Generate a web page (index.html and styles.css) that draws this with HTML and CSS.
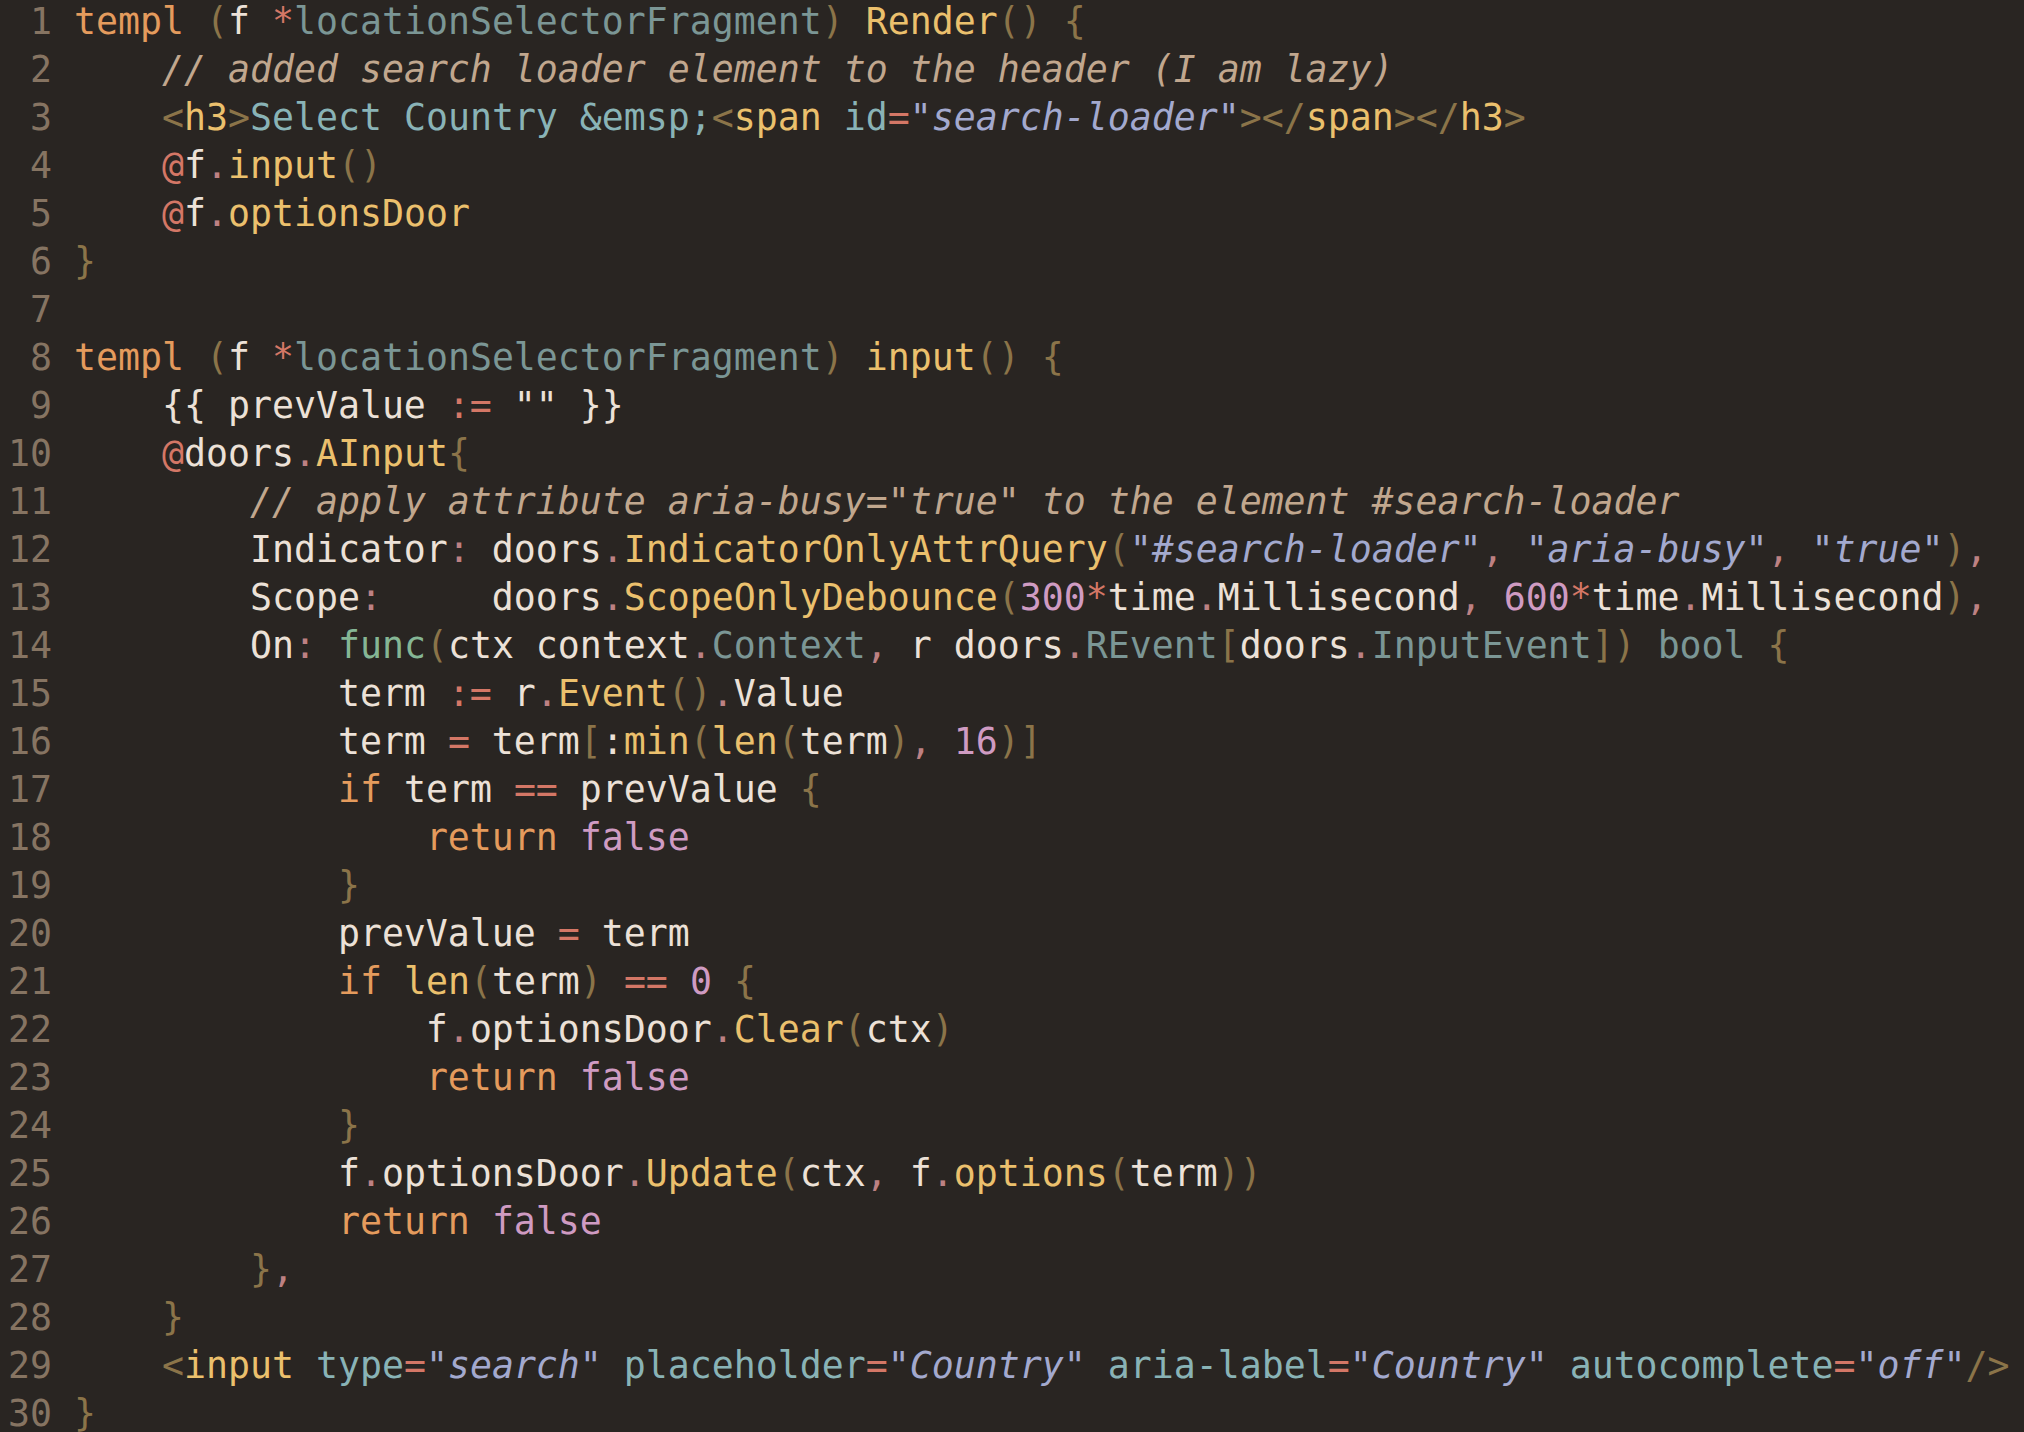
FILE: index.html
```html
<!DOCTYPE html>
<html lang="en">
<head>
<meta charset="utf-8">
<title>templ code</title>
<link rel="stylesheet" href="styles.css">
</head>
<body>
<div class="editor">
<div class="line"><span class="ln">1</span><code class="src"><span class="k">templ</span> <span class="p">(</span>f <span class="op">*</span><span class="t">locationSelectorFragment</span><span class="p">)</span> <span class="fn">Render</span><span class="p">()</span> <span class="p">{</span></code></div>
<div class="line"><span class="ln">2</span><code class="src">    <span class="c">// added search loader element to the header (I am lazy)</span></code></div>
<div class="line"><span class="ln">3</span><code class="src">    <span class="p">&lt;</span><span class="fn">h3</span><span class="p">&gt;</span><span class="a">Select Country &amp;emsp;</span><span class="p">&lt;</span><span class="fn">span</span> <span class="a">id</span><span class="op">=</span><span class="s">"search-loader"</span><span class="p">&gt;&lt;/</span><span class="fn">span</span><span class="p">&gt;&lt;/</span><span class="fn">h3</span><span class="p">&gt;</span></code></div>
<div class="line"><span class="ln">4</span><code class="src">    <span class="op">@</span>f<span class="d">.</span><span class="fn">input</span><span class="p">()</span></code></div>
<div class="line"><span class="ln">5</span><code class="src">    <span class="op">@</span>f<span class="d">.</span><span class="fn">optionsDoor</span></code></div>
<div class="line"><span class="ln">6</span><code class="src"><span class="p">}</span></code></div>
<div class="line"><span class="ln">7</span><code class="src"></code></div>
<div class="line"><span class="ln">8</span><code class="src"><span class="k">templ</span> <span class="p">(</span>f <span class="op">*</span><span class="t">locationSelectorFragment</span><span class="p">)</span> <span class="fn">input</span><span class="p">()</span> <span class="p">{</span></code></div>
<div class="line"><span class="ln">9</span><code class="src">    {{ prevValue <span class="op">:=</span> "" }}</code></div>
<div class="line"><span class="ln">10</span><code class="src">    <span class="op">@</span>doors<span class="d">.</span><span class="fn">AInput</span><span class="p">{</span></code></div>
<div class="line"><span class="ln">11</span><code class="src">        <span class="c">// apply attribute aria-busy="true" to the element #search-loader</span></code></div>
<div class="line"><span class="ln">12</span><code class="src">        Indicator<span class="d">:</span> doors<span class="d">.</span><span class="fn">IndicatorOnlyAttrQuery</span><span class="p">(</span><span class="s">"#search-loader"</span><span class="d">,</span> <span class="s">"aria-busy"</span><span class="d">,</span> <span class="s">"true"</span><span class="p">)</span><span class="d">,</span></code></div>
<div class="line"><span class="ln">13</span><code class="src">        Scope<span class="d">:</span>     doors<span class="d">.</span><span class="fn">ScopeOnlyDebounce</span><span class="p">(</span><span class="n">300</span><span class="op">*</span>time<span class="d">.</span>Millisecond<span class="d">,</span> <span class="n">600</span><span class="op">*</span>time<span class="d">.</span>Millisecond<span class="p">)</span><span class="d">,</span></code></div>
<div class="line"><span class="ln">14</span><code class="src">        On<span class="d">:</span> <span class="g">func</span><span class="p">(</span>ctx context<span class="d">.</span><span class="t">Context</span><span class="d">,</span> r doors<span class="d">.</span><span class="t">REvent</span><span class="p">[</span>doors<span class="d">.</span><span class="t">InputEvent</span><span class="p">])</span> <span class="t">bool</span> <span class="p">{</span></code></div>
<div class="line"><span class="ln">15</span><code class="src">            term <span class="op">:=</span> r<span class="d">.</span><span class="fn">Event</span><span class="p">()</span><span class="d">.</span>Value</code></div>
<div class="line"><span class="ln">16</span><code class="src">            term <span class="op">=</span> term<span class="p">[</span>:<span class="fn">min</span><span class="p">(</span><span class="fn">len</span><span class="p">(</span>term<span class="p">)</span><span class="d">,</span> <span class="n">16</span><span class="p">)]</span></code></div>
<div class="line"><span class="ln">17</span><code class="src">            <span class="k">if</span> term <span class="op">==</span> prevValue <span class="p">{</span></code></div>
<div class="line"><span class="ln">18</span><code class="src">                <span class="k">return</span> <span class="n">false</span></code></div>
<div class="line"><span class="ln">19</span><code class="src">            <span class="p">}</span></code></div>
<div class="line"><span class="ln">20</span><code class="src">            prevValue <span class="op">=</span> term</code></div>
<div class="line"><span class="ln">21</span><code class="src">            <span class="k">if</span> <span class="fn">len</span><span class="p">(</span>term<span class="p">)</span> <span class="op">==</span> <span class="n">0</span> <span class="p">{</span></code></div>
<div class="line"><span class="ln">22</span><code class="src">                f<span class="d">.</span>optionsDoor<span class="d">.</span><span class="fn">Clear</span><span class="p">(</span>ctx<span class="p">)</span></code></div>
<div class="line"><span class="ln">23</span><code class="src">                <span class="k">return</span> <span class="n">false</span></code></div>
<div class="line"><span class="ln">24</span><code class="src">            <span class="p">}</span></code></div>
<div class="line"><span class="ln">25</span><code class="src">            f<span class="d">.</span>optionsDoor<span class="d">.</span><span class="fn">Update</span><span class="p">(</span>ctx<span class="d">,</span> f<span class="d">.</span><span class="fn">options</span><span class="p">(</span>term<span class="p">))</span></code></div>
<div class="line"><span class="ln">26</span><code class="src">            <span class="k">return</span> <span class="n">false</span></code></div>
<div class="line"><span class="ln">27</span><code class="src">        <span class="p">}</span><span class="d">,</span></code></div>
<div class="line"><span class="ln">28</span><code class="src">    <span class="p">}</span></code></div>
<div class="line"><span class="ln">29</span><code class="src">    <span class="p">&lt;</span><span class="fn">input</span> <span class="a">type</span><span class="op">=</span><span class="s">"search"</span> <span class="a">placeholder</span><span class="op">=</span><span class="s">"Country"</span> <span class="a">aria-label</span><span class="op">=</span><span class="s">"Country"</span> <span class="a">autocomplete</span><span class="op">=</span><span class="s">"off"</span><span class="p">/&gt;</span></code></div>
<div class="line"><span class="ln">30</span><code class="src"><span class="p">}</span></code></div>
</div>
</body>
</html>
```

FILE: styles.css
```css
html, body {
  margin: 0;
  padding: 0;
  background: #292522;
  overflow: hidden;
}

.editor {
  font-family: "DejaVu Sans Mono", "Liberation Mono", monospace;
  font-size: 36.54px;
  line-height: 48px;
  color: #ECE1D7;
  padding-left: 8px;
  margin-top: -2px;
}

.line {
  display: flex;
  height: 48px;
}

.ln {
  width: 2ch;
  margin-right: 1ch;
  text-align: right;
  color: #867462;
  flex: none;
}

.src {
  font: inherit;
  white-space: pre;
}

.k { color: #E49B5D; }
.fn { color: #EBC06D; }
.p { color: #8B7449; }
.op { color: #D47766; }
.d { color: #BD8183; }
.t { color: #7B9695; }
.a { color: #89B3B6; }
.s { color: #A3A9CE; font-style: italic; }
.n { color: #CF9BC2; }
.g { color: #85B695; }
.c { color: #C1A78E; font-style: italic; }
```
